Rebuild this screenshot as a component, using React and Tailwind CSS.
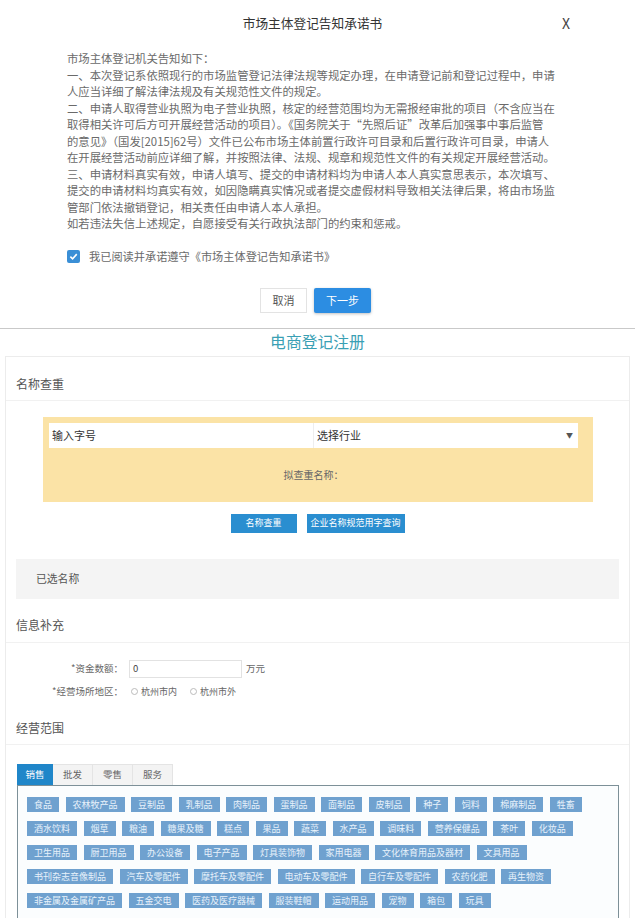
import React from "react";

const bodyLines = [
  "市场主体登记机关告知如下：",
  "一、本次登记系依照现行的市场监管登记法律法规等规定办理，在申请登记前和登记过程中，申请",
  "人应当详细了解法律法规及有关规范性文件的规定。",
  "二、申请人取得营业执照为电子营业执照，核定的经营范围均为无需报经审批的项目（不含应当在",
  "取得相关许可后方可开展经营活动的项目）。《国务院关于“先照后证”改革后加强事中事后监管",
  "的意见》（国发[2015]62号）文件已公布市场主体前置行政许可目录和后置行政许可目录，申请人",
  "在开展经营活动前应详细了解，并按照法律、法规、规章和规范性文件的有关规定开展经营活动。",
  "三、申请材料真实有效，申请人填写、提交的申请材料均为申请人本人真实意思表示，本次填写、",
  "提交的申请材料均真实有效，如因隐瞒真实情况或者提交虚假材料导致相关法律后果，将由市场监",
  "管部门依法撤销登记，相关责任由申请人本人承担。",
  "如若违法失信上述规定，自愿接受有关行政执法部门的约束和惩戒。",
];

const tagRows = [
  ["食品", "农林牧产品", "豆制品", "乳制品", "肉制品", "蛋制品", "面制品", "皮制品", "种子", "饲料", "棉麻制品", "牲畜"],
  ["酒水饮料", "烟草", "粮油", "糖果及糖", "糕点", "果品", "蔬菜", "水产品", "调味料", "营养保健品", "茶叶", "化妆品"],
  ["卫生用品", "厨卫用品", "办公设备", "电子产品", "灯具装饰物", "家用电器", "文化体育用品及器材", "文具用品"],
  ["书刊杂志音像制品", "汽车及零配件", "摩托车及零配件", "电动车及零配件", "自行车及零配件", "农药化肥", "再生物资"],
  ["非金属及金属矿产品", "五金交电", "医药及医疗器械", "服装鞋帽", "运动用品", "宠物", "箱包", "玩具"],
];

const font = { fontFamily: '"Noto Sans CJK SC", "Noto Sans", sans-serif' };

export default function App() {
  return (
    <div
      className="w-[635px] h-[918px] overflow-hidden bg-white text-[#555]"
      style={font}
    >
      {/* Modal part */}
      <div className="grid grid-cols-[1fr_auto_1fr] items-center h-[46px]">
        <div />
        <div className="text-[12.7px] text-[#333] leading-[18px] mr-[10px]">市场主体登记告知承诺书</div>
        <div className="flex justify-end pr-[65px] text-[14px] text-[#444] leading-[18px]">X</div>
      </div>
      <div className="pl-[67px] mt-[4px] text-[11.35px] leading-[16.5px] text-[#6a6a6a]">
        {bodyLines.map((l, i) => (
          <div key={i} className="whitespace-nowrap">{l}</div>
        ))}
      </div>
      <div className="pl-[67px] mt-[17px] flex items-center h-[16px] gap-[9px]">
        <div className="w-[13px] h-[13px] rounded-[2px] bg-[#3a8fd6] flex items-center justify-center">
          <svg width="9" height="9" viewBox="0 0 10 10">
            <path d="M1.5 5.2 L4 7.6 L8.6 2.4" fill="none" stroke="white" strokeWidth="1.8" />
          </svg>
        </div>
        <div className="text-[11.2px] text-[#6a6a6a] whitespace-nowrap">我已阅读并承诺遵守《市场主体登记告知承诺书》</div>
      </div>
      <div className="mt-[23px] flex justify-center gap-[7px] h-[25px] pr-[4px]">
        <div className="w-[47px] h-[25px] border border-[#e3e3e3] bg-white text-[11px] text-[#555] flex items-center justify-center">取消</div>
        <div className="w-[57px] h-[25px] rounded-[2px] bg-[#2c8de2] text-[11px] text-white flex items-center justify-center shadow-[0_1px_3px_rgba(0,0,0,0.25)]">下一步</div>
      </div>
      <div className="mt-[15px] h-[1px] bg-[#c9c9c9]" />

      {/* Registration part */}
      <div className="h-[27px] flex items-center justify-center text-[15.8px] text-[#3aa0b4] leading-[20px]">电商登记注册</div>
      <div className="mx-[5px] border-t border-l border-r border-[#ececec] h-[600px]">
        <div className="h-[44px] pt-[18px] pl-[10px] text-[12px] leading-[18px] text-[#555] border-b border-[#f1f1f1]">名称查重</div>
        <div className="mt-[16px] ml-[37px] mr-[36px] h-[85px] bg-[#fbe3a6] flex flex-col pt-[6px] pl-[6px] pr-[15px]">
          <div className="flex h-[25px]">
            <div className="w-[265px] h-[25px] bg-white border-r border-[#eee] flex items-center pl-[3px] text-[11px] text-[#333]">输入字号</div>
            <div className="flex-1 h-[25px] bg-white flex items-center justify-between pl-[3px] pr-[5px] text-[11px] text-[#333]">
              <span>选择行业</span>
              <span className="text-[7px] text-[#555]">▼</span>
            </div>
          </div>
          <div className="flex-1 flex items-center justify-center text-[10px] text-[#666]">拟查重名称：</div>
        </div>
        <div className="mt-[12px] flex justify-center gap-[10px]">
          <div className="w-[66px] h-[19px] bg-[#2a8ed0] text-white text-[9px] flex items-center justify-center">名称查重</div>
          <div className="w-[98px] h-[19px] bg-[#2a8ed0] text-white text-[9px] flex items-center justify-center">企业名称规范用字查询</div>
        </div>
        <div className="mt-[26px] mx-[10px] h-[40px] bg-[#f4f4f4] flex items-center pl-[20px] text-[10.8px] text-[#555]">已选名称</div>
        <div className="h-[44px] pt-[17px] pl-[10px] text-[12px] leading-[18px] text-[#555] border-b border-[#f1f1f1]">信息补充</div>
        <div className="mt-[17px] flex items-center h-[18px] text-[9.5px] text-[#666]">
          <div className="w-[117px] text-right">*资金数额：</div>
          <div className="ml-[6px] w-[113px] h-[18px] border border-[#e2e2e2] flex items-center pl-[3px] text-[#444]">0</div>
          <div className="ml-[4px]">万元</div>
        </div>
        <div className="mt-[5px] flex items-center h-[18px] text-[9px] text-[#666]">
          <div className="w-[117px] text-right text-[9.5px]">*经营场所地区：</div>
          <div className="ml-[8px] w-[7px] h-[7px] rounded-full border border-[#bbb]" />
          <div className="ml-[3px]">杭州市内</div>
          <div className="ml-[13px] w-[7px] h-[7px] rounded-full border border-[#bbb]" />
          <div className="ml-[3px]">杭州市外</div>
        </div>
        <div className="mt-[18px] h-[26px] pl-[10px] text-[12px] leading-[18px] text-[#555] border-b border-[#f1f1f1]">经营范围</div>
        <div className="mt-[19px] ml-[11px] flex h-[21px] text-[9.5px]">
          <div className="w-[36px] bg-[#1f86c9] text-white flex items-center justify-center">销售</div>
          <div className="w-[40px] bg-[#f3f3f3] border-t border-r border-[#e4e4e4] text-[#666] flex items-center justify-center">批发</div>
          <div className="w-[40px] bg-[#f3f3f3] border-t border-r border-[#e4e4e4] text-[#666] flex items-center justify-center">零售</div>
          <div className="w-[40px] bg-[#f3f3f3] border-t border-r border-[#e4e4e4] text-[#666] flex items-center justify-center">服务</div>
        </div>
        <div className="ml-[11px] mr-[10px] border border-[#7d9098] bg-[#fbfdfe] h-[200px] pt-[11px] pl-[9px] flex flex-col gap-[9px]">
          {tagRows.map((row, i) => (
            <div key={i} className="flex gap-[6.5px]">
              {row.map((t) => (
                <div key={t} className="h-[15px] px-[7px] bg-[#6fa1cf] text-[#e8f2fb] text-[9px] leading-[15px] whitespace-nowrap">
                  {t}
                </div>
              ))}
            </div>
          ))}
        </div>
      </div>
    </div>
  );
}
